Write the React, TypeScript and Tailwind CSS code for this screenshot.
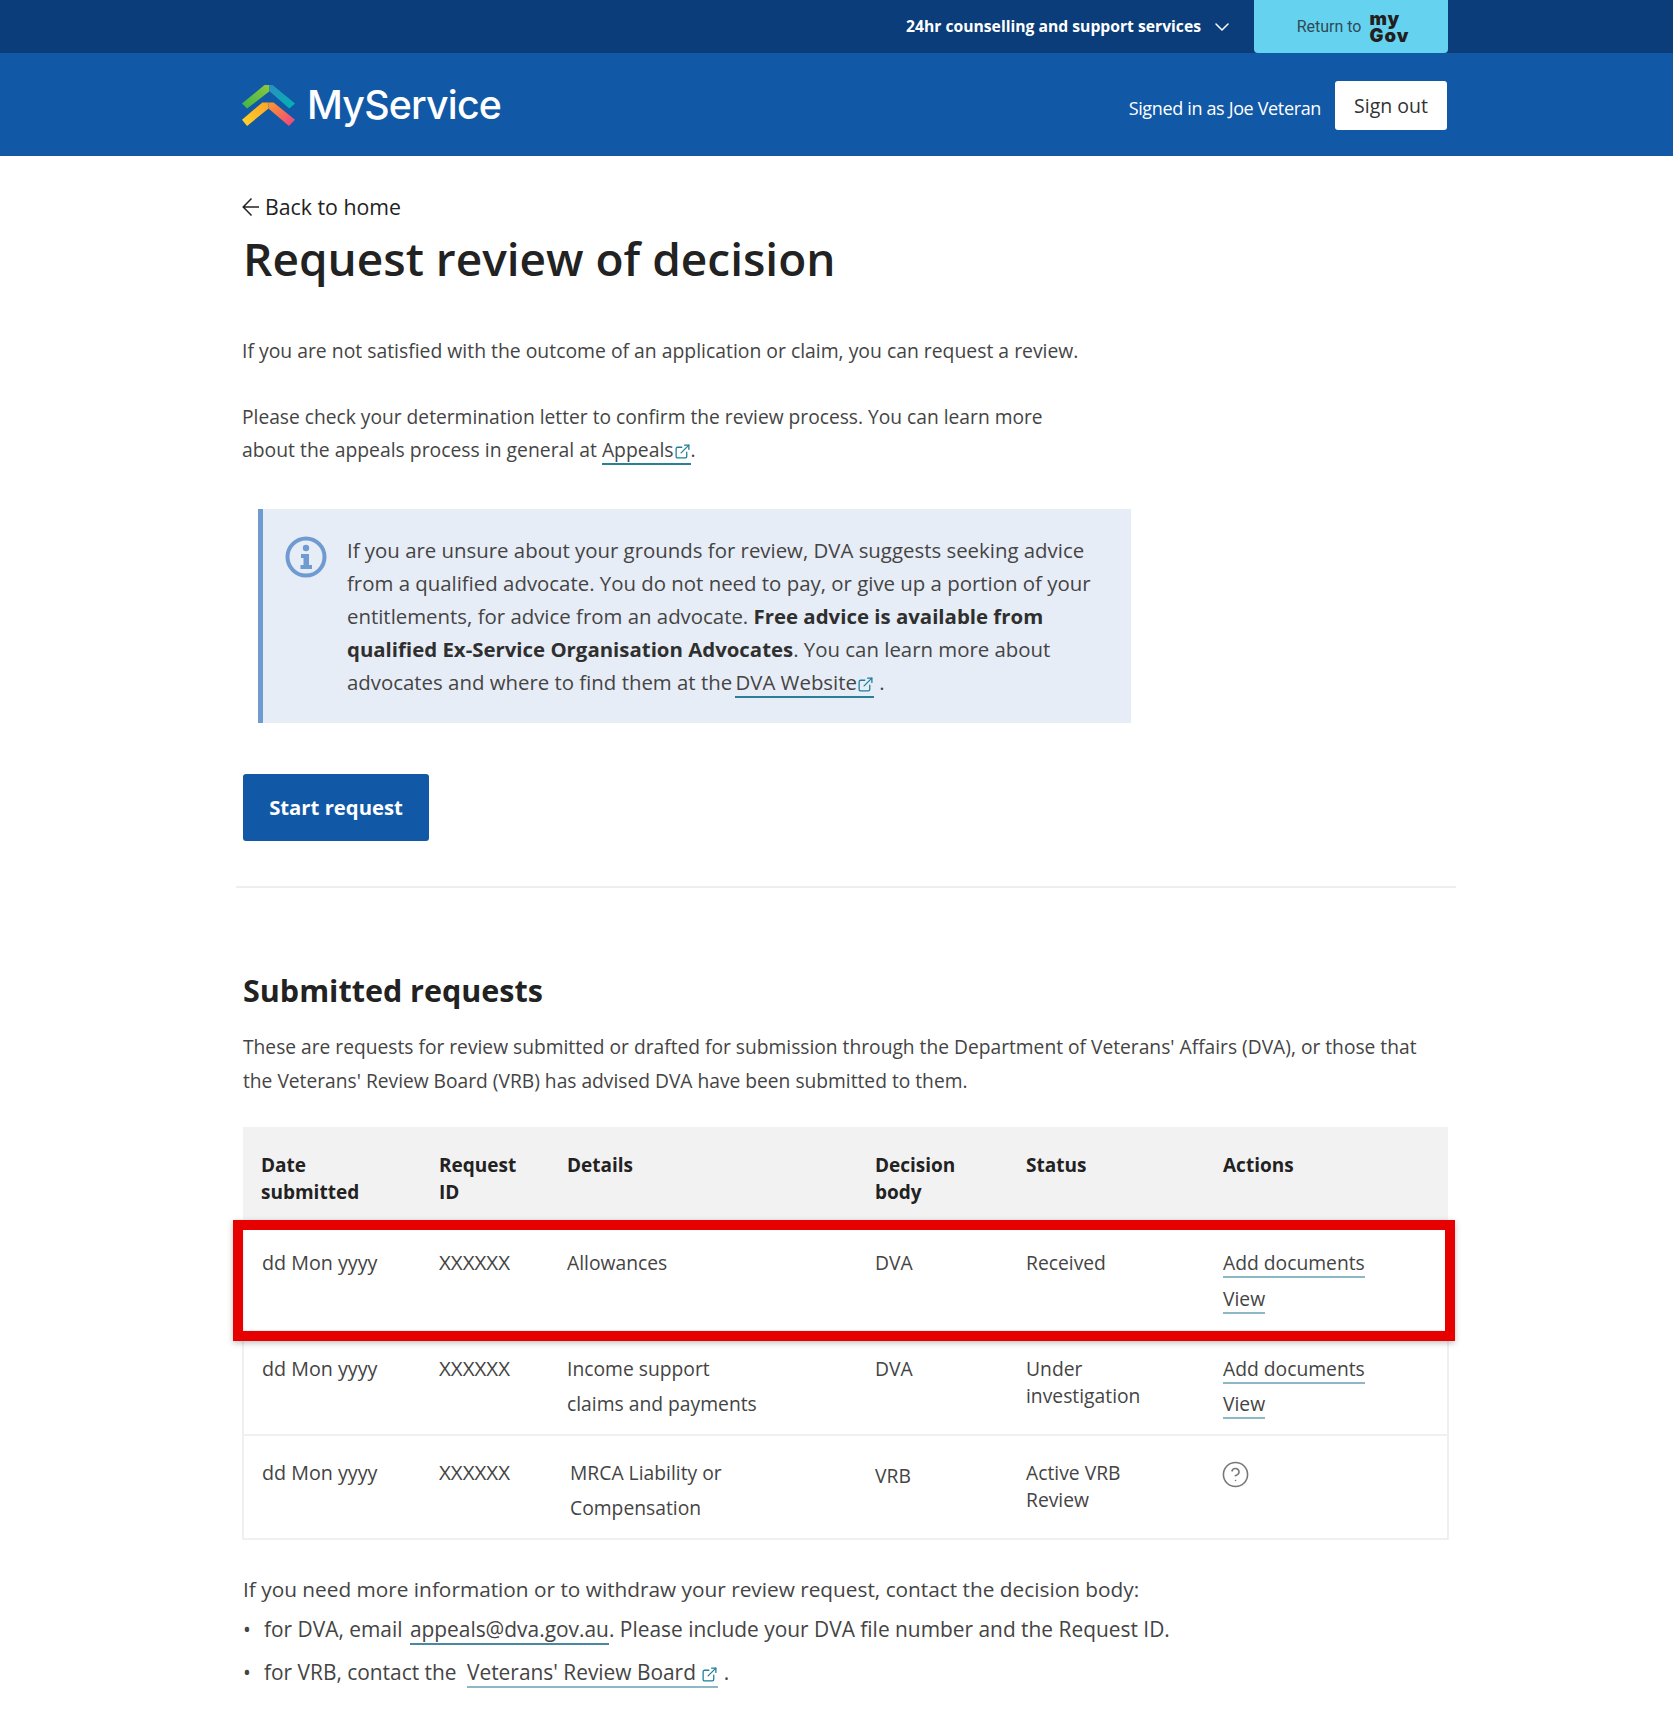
import { ChevronDown, ExternalLink, CircleHelp } from "lucide-react";

const Ext = ({ className = "" }: { className?: string }) => (
	<ExternalLink className={`inline-block h-[17px] w-[17px] text-[#1d7f97] ${className}`} strokeWidth={1.8} />
);

const Logo = () => (
	<svg width="53" height="41" viewBox="0 0 52 40">
		<defs>
			<linearGradient id="lg1" x1="0" x2="1" y1="1" y2="0">
				<stop offset="0" stopColor="#3fb54a" />
				<stop offset="1" stopColor="#8cc63f" />
			</linearGradient>
			<linearGradient id="lg2" x1="0" x2="1" y1="0" y2="1">
				<stop offset="0" stopColor="#2a8fc0" />
				<stop offset="1" stopColor="#00b5b0" />
			</linearGradient>
			<linearGradient id="lg3" x1="0" x2="1" y1="1" y2="0">
				<stop offset="0" stopColor="#ffd52b" />
				<stop offset="1" stopColor="#fba327" />
			</linearGradient>
			<linearGradient id="lg4" x1="0" x2="1" y1="0" y2="1">
				<stop offset="0" stopColor="#fb9a2b" />
				<stop offset="1" stopColor="#ec3f86" />
			</linearGradient>
		</defs>
		<path d="M0 18 L22 0 H27 L27 6 L5 23 Z" fill="url(#lg1)" />
		<path d="M27 0 H30 L52 18 L46.500 23 L27 6 Z" fill="url(#lg2)" />
		<path d="M0 34 L20 17 H26 L26 23 L5 40 Z" fill="url(#lg3)" />
		<path d="M26 17 H31 L52 34 L46 40 L26 23 Z" fill="url(#lg4)" />
	</svg>
);

const InfoIcon = () => (
	<svg width="42" height="42" viewBox="0 0 42 42" fill="none" className="mt-[2px] shrink-0">
		<circle cx="21" cy="21" r="18.500" stroke="#6f9bd1" strokeWidth="4" />
		<circle cx="21" cy="12" r="3.200" fill="#6f9bd1" />
		<path d="M16 18 H24 V29 H27 V33 H15.500 V29 H18.500 V22 H16 Z" fill="#6f9bd1" />
	</svg>
);

const BackArrow = () => (
	<svg width="17" height="20" viewBox="0 0 17 20" fill="none" stroke="#222" strokeWidth="1.500">
		<path d="M17 10 H1.500 M9.500 1.500 L1.200 10 L9.500 18.500" />
	</svg>
);

const rows = [
	{ details: ["Income support", "claims and payments"], body: "DVA", status: ["Under", "investigation"] },
	{ details: ["MRCA Liability or", "Compensation"], body: "VRB", status: ["Active VRB", "Review"] },
];

const head = "px-[19px] pt-[25px] pb-[12px] text-left align-top font-bold text-[19px] leading-[27px] text-[#222]";
const cell = "px-[19px] align-top";
const dateCell = "pl-[18px] text-[19.700px]";
const idCell = "text-[20.500px]";
const docLink = "border-b-2 border-[#8db9c6] inline-block leading-[27px]";

export default function App() {
	return (
		<div className="min-h-[1712px] bg-white font-['Open_Sans',sans-serif] text-[#444] text-[19.300px]">
			<div className="h-[53px] bg-[#0a3d79]">
				<div className="ml-[242px] flex h-full w-[1206px] items-center justify-end">
					<span className="font-bold text-[15.700px] text-white">24hr counselling and support services</span>
					<ChevronDown className="ml-[9px] mr-[20px] h-[24px] w-[24px] text-white" strokeWidth={1.5} />
					<div className="flex h-[53px] w-[194px] items-center justify-center gap-[8px] rounded-b-[4px] bg-[#65d3f0] pl-[4px]">
						<span className="font-['Roboto',sans-serif] text-[16px] text-[#2f4a55]">Return to</span>
						<span className="flex flex-col font-['Inter',sans-serif] font-black text-[#231f20] text-[18.500px] leading-[17px] tracking-[1px]">
							<span>my</span>
							<span>Gov</span>
						</span>
					</div>
				</div>
			</div>
			<div className="h-[103px] bg-[#1158a7] pt-[2px]">
				<div className="ml-[242px] flex h-full w-[1205px] items-center justify-between">
					<div className="flex items-center gap-[12px] -mt-[1px]">
						<Logo />
						<span className="font-['Inter',sans-serif] text-[39.300px] font-medium leading-none tracking-[-0.8px] text-white -mt-[1px]">MyService</span>
					</div>
					<div className="flex items-center gap-[14px]">
						<span className="mt-[6px] text-[18px] tracking-[-0.35px] text-white">Signed in as Joe Veteran</span>
						<span className="flex h-[49px] w-[112px] items-center justify-center rounded-[3px] bg-white text-[19.500px] text-[#333]">Sign out</span>
					</div>
				</div>
			</div>

			<main className="ml-[242px] w-[1207px]">
				<div className="flex items-center gap-[6px] pt-[36px] text-[21.300px] leading-[30px] text-[#222]">
					<BackArrow />
					<span>Back to home</span>
				</div>
				<h1 className="mt-[5px] ml-[1px] text-[46px] font-semibold leading-[62px] text-[#222]">Request review of decision</h1>

				<p className="mt-[45px] text-[19.380px] leading-[33px]">If you are not satisfied with the outcome of an application or claim, you can request a review.</p>
				<p className="mt-[33px] leading-[33px]">
					<span className="block text-[19.220px]">Please check your determination letter to confirm the review process. You can learn more</span>
					<span className="block text-[19.350px]">
						about the appeals process in general at{" "}
						<a className="border-b-2 border-[#2a8097]">
							Appeals
							<Ext />
						</a>
						.
					</span>
				</p>

				<div className="mt-[43px] ml-[16px] flex h-[214px] w-[873px] gap-[20px] border-l-[5px] border-[#6f9bd1] bg-[#e7edf6] pl-[22px] pt-[25px]">
					<InfoIcon />
					<p className="w-[780px] whitespace-nowrap text-[20.400px] leading-[33px]">
						<span className="block">If you are unsure about your grounds for review, DVA suggests seeking advice</span>
						<span className="block">from a qualified advocate. You do not need to pay, or give up a portion of your</span>
						<span className="block">
							entitlements, for advice from an advocate. <b className="text-[#2f2f2f]">Free advice is available from</b>
						</span>
						<span className="block">
							<b className="text-[#2f2f2f]">qualified Ex-Service Organisation Advocates</b>. You can learn more about
						</span>
						<span className="block">
							advocates and where to find them at the{" "}
							<a className="-ml-[2px] border-b-2 border-[#2a8097]">
								DVA Website
								<Ext />
							</a>{" "}
							.
						</span>
					</p>
				</div>

				<button className="mt-[51px] ml-[1px] block h-[67px] w-[186px] rounded-[3px] bg-[#1158a7] text-[20.300px] font-bold text-white">Start request</button>

				<hr className="mt-[45px] -ml-[6px] w-[1220px] border-t-2 border-[#eeeeee]" />

				<h2 className="mt-[80px] ml-[1px] text-[30.500px] font-bold leading-[44px] text-[#222]">Submitted requests</h2>
				<p className="mt-[18px] ml-[1px] text-[19.200px] leading-[34px]">
					<span className="block">These are requests for review submitted or drafted for submission through the Department of Veterans' Affairs (DVA), or those that</span>
					<span className="block">the Veterans' Review Board (VRB) has advised DVA have been submitted to them.</span>
				</p>

				<div className="relative mt-[29px] w-[1205px]">
					<table className="w-full table-fixed border-collapse">
						<colgroup>
							<col className="w-[177px]" />
							<col className="w-[128px]" />
							<col className="w-[308px]" />
							<col className="w-[151px]" />
							<col className="w-[197px]" />
							<col className="w-[244px]" />
						</colgroup>
						<thead className="bg-[#f2f2f2]">
							<tr className="h-[99px]">
								<th className={`${head} pl-[18px]`}>Date submitted</th>
								<th className={head}>Request ID</th>
								<th className={`${head} pt-[24px]`}>Details</th>
								<th className={head}>Decision body</th>
								<th className={head}>Status</th>
								<th className={head}>Actions</th>
							</tr>
						</thead>
						<tbody>
							<tr className="h-[105px] border-2 border-[#f0f0f0] leading-[33px]">
								<td className={`${cell} ${dateCell} pt-[19px]`}>dd Mon yyyy</td>
								<td className={`${cell} ${idCell} pt-[19px]`}>XXXXXX</td>
								<td className={`${cell} pt-[19px]`}>Allowances</td>
								<td className={`${cell} pt-[19px]`}>DVA</td>
								<td className={`${cell} pt-[19px]`}>Received</td>
								<td className={`${cell} pt-[19px]`}>
									<a className={docLink}>Add documents</a>
									<br />
									<a className={`${docLink} mt-[6px]`}>View</a>
								</td>
							</tr>
							{rows.map((row, i) => (
								<tr key={row.body} className="h-[104px] border-2 border-[#f0f0f0] leading-[35px]">
									<td className={`${cell} ${dateCell} pt-[19px]`}>dd Mon yyyy</td>
									<td className={`${cell} ${idCell} pt-[19px]`}>XXXXXX</td>
									<td className={`${cell} pt-[19px] ${i === 1 ? "pl-[22px]" : ""}`}>
										<span className="block">{row.details[0]}</span>
										<span className="block">{row.details[1]}</span>
									</td>
									<td className={`${cell} ${i === 1 ? "pt-[22px]" : "pt-[19px]"}`}>{row.body}</td>
									<td className={`${cell} pt-[19px] leading-[27px]`}>
										<div className="pt-[4px]">
											<span className="block">{row.status[0]}</span>
											<span className="block">{row.status[1]}</span>
										</div>
									</td>
									<td className={`${cell} pt-[19px]`}>
										{i === 0 ? (
											<>
												<a className={docLink}>Add documents</a>
												<br />
												<a className={`${docLink} mt-[1px]`}>View</a>
											</>
										) : (
											<CircleHelp className="-ml-[2px] mt-[5px] h-[29px] w-[29px] text-[#777]" strokeWidth={1.3} />
										)}
									</td>
								</tr>
							))}
						</tbody>
					</table>
					<div className="absolute -left-[9px] top-[93px] h-[121px] w-[1222px] border-[10px] border-[#e60000] shadow-[0_2px_6px_rgba(0,0,0,0.25)]" />
				</div>

				<div className="text-[20.900px]">
					<p className="mt-[33px] ml-[1px] text-[20.800px] leading-[33px]">If you need more information or to withdraw your review request, contact the decision body:</p>
					<ul className="ml-[1px] leading-[33px]">
						<li className="mt-[7px] flex">
							<span className="w-[21px]">•</span>
							<span>
								for DVA, email <a className="ml-[2px] border-b-2 border-[#4a87a0]">appeals@dva.gov.au</a>. Please include your DVA file number and the Request ID.
							</span>
						</li>
						<li className="mt-[10px] flex">
							<span className="w-[21px]">•</span>
							<span>
								for VRB, contact the{" "}
								<a className="ml-[5px] border-b-2 border-[#8db9c6]">
									Veterans' Review Board <Ext />
								</a>{" "}
								.
							</span>
						</li>
					</ul>
				</div>
			</main>
		</div>
	);
}
